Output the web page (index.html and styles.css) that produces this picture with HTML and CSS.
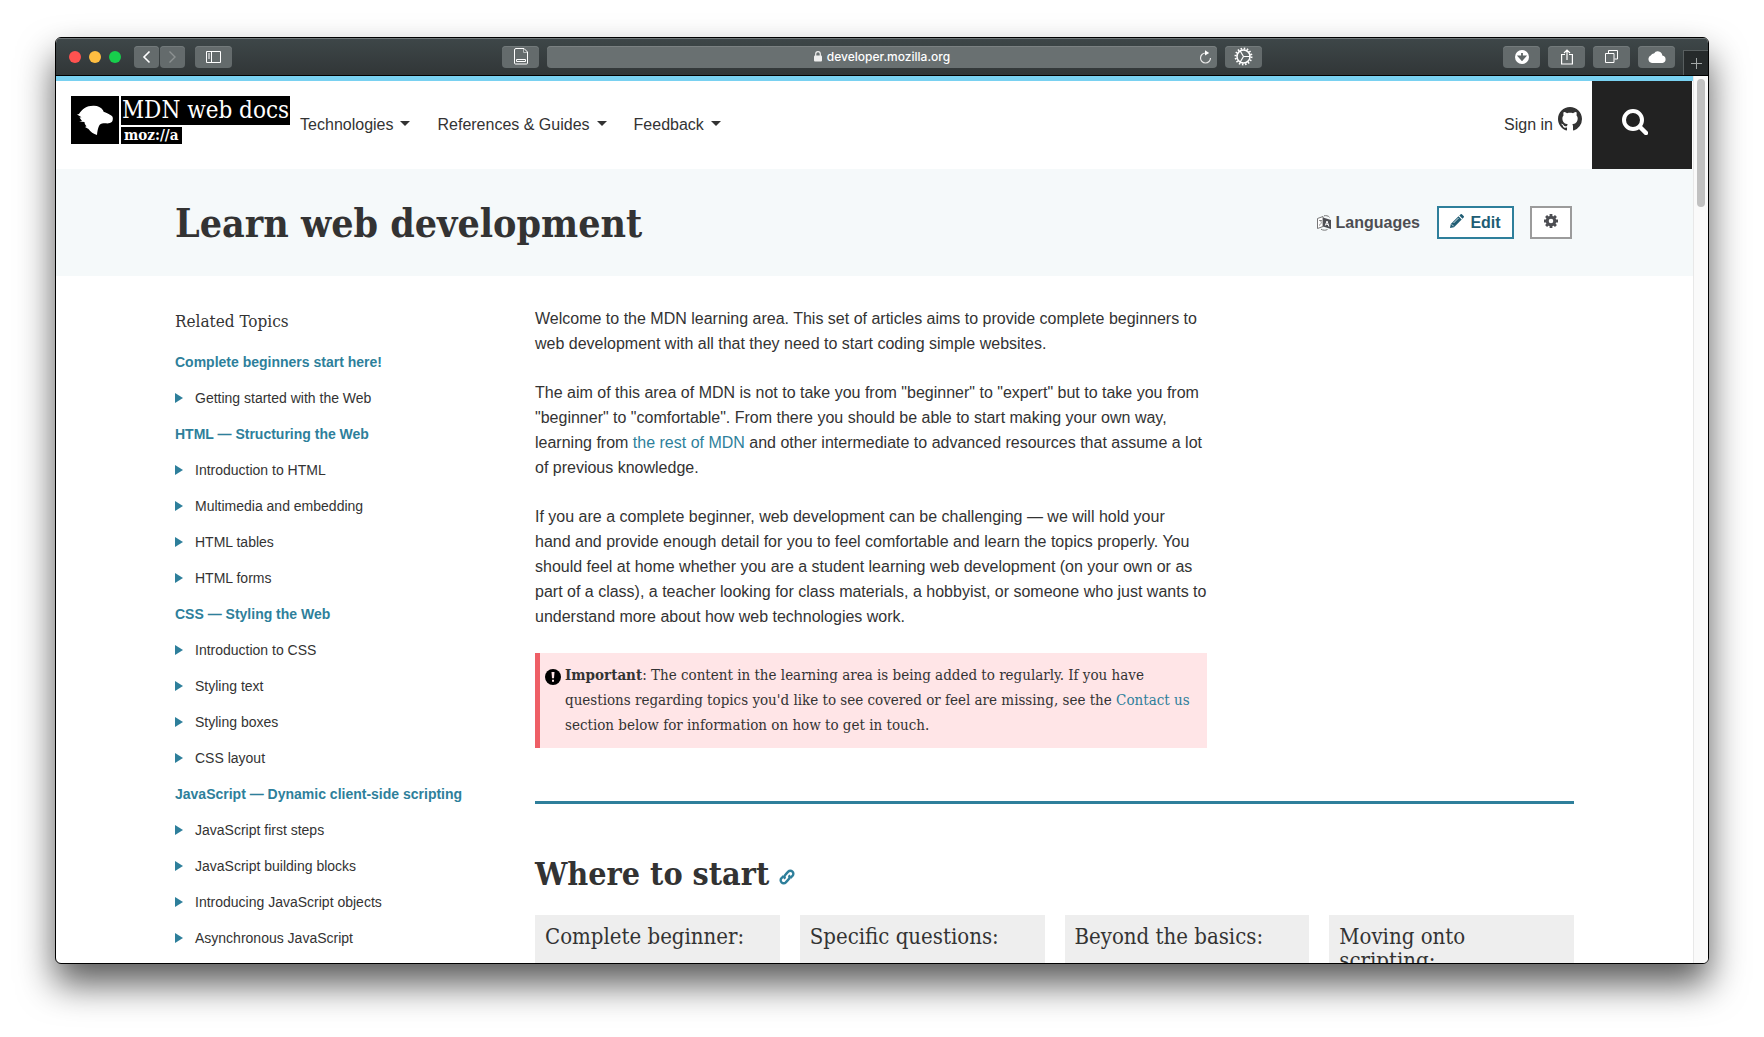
FILE: index.html
```html
<!DOCTYPE html>
<html lang="en">
<head>
<meta charset="utf-8">
<title>Learn web development</title>
<link rel="stylesheet" href="styles.css">
</head>
<body>
<div class="window">
  <div class="toolbar">
    <div class="tools tools-left">
      <span class="light light-red"></span>
      <span class="light light-yellow"></span>
      <span class="light light-green"></span>
      <div class="history">
        <button class="tool tool-half" aria-label="Back"><svg width="9" height="14" viewBox="0 0 9 14"><path d="M7.500 1.500L2 7l5.500 5.500" fill="none" stroke="#fff" stroke-width="1.600"/></svg></button>
        <button class="tool tool-half" aria-label="Forward"><svg width="9" height="14" viewBox="0 0 9 14"><path d="M1.500 1.500L7 7l-5.500 5.500" fill="none" stroke="#8d9292" stroke-width="1.400"/></svg></button>
      </div>
      <button class="tool" aria-label="Sidebar"><svg width="16" height="12" viewBox="0 0 16 12" fill="none" stroke="#fff"><path d="M.5.5h14v11H.5zM5.500.5v11M2 3h2M2 5h2M2 7h2"/></svg></button>
    </div>
    <div class="tools tools-center">
      <button class="tool" aria-label="Reader"><svg width="14" height="17" viewBox="0 0 14 17" fill="none" stroke="#fff"><path d="M2 .5h8l3.500 3.500v11a1 1 0 0 1-1 1h-11a1 1 0 0 1-1-1V2A1.500 1.500 0 0 1 2 .5zM2.500 11.500h9v2h-9z"/><path d="M9.500 1v3.500H13" stroke="#b5baba"/></svg></button>
      <div class="address">
        <svg width="8" height="11" viewBox="0 0 8 11"><rect y="4.500" width="8" height="6" rx="1" fill="#eee"/><path d="M1.700 5V3a2.300 2.300 0 0 1 4.600 0v2" fill="none" stroke="#eee" stroke-width="1.200"/></svg>
        <span>developer.mozilla.org</span>
        <button class="reload" aria-label="Reload"><svg width="13" height="14" viewBox="0 0 13 14"><path d="M7 3H6.500a5 5 0 1 0 5 5" fill="none" stroke="#e8e8e8" stroke-width="1.200"/><path d="M6 .3L10.200 3 6 5.500z" fill="#fff"/></svg></button>
      </div>
      <button class="tool" aria-label="Settings"><svg width="19" height="19" viewBox="0 0 19 19" fill="none" stroke="#fff"><circle cx="9.500" cy="9.500" r="8" stroke-width="2" stroke-dasharray="1.500 1.642"/><circle cx="9.500" cy="9.500" r="6.500" stroke-width="1.500"/><path d="M9.500 9.500H16M9.500 9.500L6.200 4M9.500 9.500L6.200 15" stroke-width="1.200"/></svg></button>
    </div>
    <div class="tools tools-right">
      <button class="tool" aria-label="Downloads"><svg width="14" height="14" viewBox="0 0 14 14"><circle cx="7" cy="7" r="7" fill="#fff"/><path d="M7 3v5.500M3.900 6.500L7 10l3.100-3.500z" stroke="#5f6666" stroke-width="1.800" fill="#5f6666"/></svg></button>
      <button class="tool" aria-label="Share"><svg width="12" height="16" viewBox="0 0 12 16" fill="none" stroke="#fff"><path d="M4 5.500H.6v9.500h10.800V5.500H8M6 11V1.200M3 4l3-3 3 3" stroke-width="1.200"/></svg></button>
      <button class="tool" aria-label="Tabs"><svg width="13" height="13" viewBox="0 0 13 13" fill="none" stroke="#fff"><path d="M.5 3.500h8.500v9H.5zM3.500 3V.5h9v8.500H9.500"/></svg></button>
      <button class="tool" aria-label="iCloud"><svg width="18" height="12" viewBox="0 0 18 12" fill="#fff"><path d="M4 12a4 4 0 0 1-1-7.700A3 3 0 0 1 6 2.500 4.500 4.500 0 0 1 14.300 4.500 3.800 3.800 0 0 1 14.500 12z"/></svg></button>
      <button class="new-tab" aria-label="New tab"><svg width="11" height="11" viewBox="0 0 11 11"><path d="M5.500 0v11M0 5.500h11" stroke="#a4a8a8"/></svg></button>
    </div>
  </div>

  <div class="viewport">
    <div class="page">
      <header class="site-header">
        <a class="logo" href="#" aria-label="MDN web docs">
          <svg class="logo-mark" width="48" height="48" viewBox="0 0 48 48"><rect width="48" height="48"/><path fill="#fff" d="M8 18c3-5 8-8.500 15-8.200 4 .1 7 1.700 9 4.400l.6 1.600c2.300.7 6 2.500 8.400 4.200 1.300 1 1 4.500 0 5.800-1.700 1.800-4.500 1.800-7 1.500-3-.5-5 .5-6 2.700-1.200 2.700-1.700 5.500-2 8.900-3.500-1-6.500-3.200-8.500-6l-3.500-2 1.500-.6c-1.200-1.500-2-2.700-2-4.300L8 25.500l3-.6-2.500-3.400 2-.3L6 18.500z"/></svg>
          <span class="logo-words">
            <span class="logo-name">MDN web docs</span>
            <span class="logo-owner">moz://a</span>
          </span>
        </a>
        <nav class="main-nav">
          <a href="#">Technologies<span class="caret"></span></a>
          <a href="#">References &amp; Guides<span class="caret"></span></a>
          <a href="#">Feedback<span class="caret"></span></a>
        </nav>
        <a class="sign-in" href="#">Sign in
          <svg width="24" height="24" viewBox="0 0 16 16" fill="#333"><path d="M8 0C3.580 0 0 3.580 0 8c0 3.540 2.290 6.530 5.470 7.590.4.070.55-.17.55-.38 0-.19-.01-.82-.01-1.490-2.010.37-2.530-.49-2.690-.94-.09-.23-.48-.94-.82-1.130-.28-.15-.68-.52-.01-.53.63-.01 1.080.58 1.230.82.72 1.210 1.870.87 2.330.66.07-.52.28-.87.51-1.070-1.780-.2-3.640-.89-3.640-3.950 0-.87.31-1.590.82-2.150-.08-.2-.36-1.020.08-2.120 0 0 .67-.21 2.200.82.64-.18 1.320-.27 2-.27s1.360.09 2 .27c1.530-1.040 2.200-.82 2.200-.82.44 1.100.16 1.920.08 2.120.51.56.82 1.270.82 2.150 0 3.070-1.870 3.750-3.650 3.950.29.25.54.73.54 1.480 0 1.070-.01 1.930-.01 2.200 0 .21.15.46.55.38A8.010 8.010 0 0 0 16 8c0-4.420-3.580-8-8-8z"/></svg>
        </a>
        <button class="search" aria-label="Search"><svg width="26" height="26" viewBox="0 0 26 26" fill="none" stroke="#fff"><circle cx="11" cy="11" r="9" stroke-width="4"/><path d="M18 18l6 6" stroke-width="4.500" stroke-linecap="round"/></svg></button>
      </header>

      <div class="hero">
        <h1>Learn web development</h1>
        <div class="actions">
          <a class="languages" href="#"><svg width="14" height="16" viewBox="0 0 14 16"><path d="M.5 3.500L6 1.500v10L.5 13.500z" fill="#fff" stroke="#777"/><path d="M2 5.500h3M3.500 5v1.500M2 10.500c1.500-1 2.500-2.500 2.500-4" stroke="#777" fill="none" stroke-width=".8"/><path d="M6 2.500l8 2.500v9l-8-2.500z" fill="#4d4e53"/><path d="M8.300 10.500L10 6l1.900 5.500M9 9l2.300.7" stroke="#fff" fill="none"/><path d="M4 14.200c2 1.300 4.500 1.300 6.500.3M7 .8c1.500-.4 4.500-.1 5.500 1.500" stroke="#777" fill="none"/></svg>Languages</a>
          <button class="action edit"><svg width="14" height="14" viewBox="0 0 14 14" fill="#205d74"><path d="M0 14l.8-4L8.500 2.300l3.200 3.200L4 13.200z"/><path d="M9.300 1.500L10.400.4a1.200 1.200 0 0 1 1.700 0l1.500 1.500a1.200 1.200 0 0 1 0 1.700l-1.100 1.100z"/><path d="M1.700 10.300l2 2M3.500 9l5-5" stroke="#fff" stroke-width=".8"/></svg>Edit</button>
          <button class="action advanced" aria-label="Advanced"><svg width="14" height="14" viewBox="0 0 14 14" fill="none" stroke="#4d4e53"><circle cx="7" cy="7" r="3.800" stroke-width="3"/><path d="M7 0v2.500M7 11.500V14M0 7h2.500M11.500 7H14M2.050 2.050l1.800 1.800M10.150 10.150l1.800 1.800M2.050 11.950l1.800-1.800M10.150 3.850l1.800-1.800" stroke-width="2.800"/></svg></button>
        </div>
      </div>

      <div class="columns">
        <aside class="sidebar">
          <h2>Related Topics</h2>
          <ul>
            <li><a class="topic" href="#">Complete beginners start here!</a></li>
            <li><a class="item" href="#">Getting started with the Web</a></li>
            <li><a class="topic" href="#">HTML — Structuring the Web</a></li>
            <li><a class="item" href="#">Introduction to HTML</a></li>
            <li><a class="item" href="#">Multimedia and embedding</a></li>
            <li><a class="item" href="#">HTML tables</a></li>
            <li><a class="item" href="#">HTML forms</a></li>
            <li><a class="topic" href="#">CSS — Styling the Web</a></li>
            <li><a class="item" href="#">Introduction to CSS</a></li>
            <li><a class="item" href="#">Styling text</a></li>
            <li><a class="item" href="#">Styling boxes</a></li>
            <li><a class="item" href="#">CSS layout</a></li>
            <li><a class="topic" href="#">JavaScript — Dynamic client-side scripting</a></li>
            <li><a class="item" href="#">JavaScript first steps</a></li>
            <li><a class="item" href="#">JavaScript building blocks</a></li>
            <li><a class="item" href="#">Introducing JavaScript objects</a></li>
            <li><a class="item" href="#">Asynchronous JavaScript</a></li>
          </ul>
        </aside>

        <main class="article">
          <div class="intro">
            <p>Welcome to the MDN learning area. This set of articles aims to provide complete beginners to web development with all that they need to start coding simple websites.</p>
            <p>The aim of this area of MDN is not to take you from "beginner" to "expert" but to take you from "beginner" to "comfortable". From there you should be able to start making your own way, learning from <a href="#">the rest of MDN</a> and other intermediate to advanced resources that assume a lot of previous knowledge.</p>
            <p>If you are a complete beginner, web development can be challenging — we will hold your<br>hand and provide enough detail for you to feel comfortable and learn the topics properly. You should feel at home whether you are a student learning web development (on your own or as part of a class), a teacher looking for class materials, a hobbyist, or someone who just wants to understand more about how web technologies work.</p>
            <div class="warning">
              <svg width="16" height="16" viewBox="0 0 16 16"><circle cx="8" cy="8" r="8"/><path d="M6.500 3h3L9 9.300H7zM7 10.800h2v2H7z" fill="#ffe5e7"/></svg>
              <p><strong>Important</strong>: The content in the learning area is being added to regularly. If you have<br>questions regarding topics you'd like to see covered or feel are missing, see the <a href="#">Contact us</a><br>section below for information on how to get in touch.</p>
            </div>
          </div>

          <section class="start">
            <h2>Where to start <a href="#" aria-label="Permalink"><svg width="16" height="16" viewBox="0 0 16 16" fill="none" stroke="#2e7f9b" stroke-width="2.400"><path d="M6.200 9.800a3 3 0 0 1 .3-4.200l2.700-3a3 3 0 0 1 4.300 4.200l-2 2.200"/><path d="M9.800 6.200a3 3 0 0 1-.3 4.200l-2.700 3a3 3 0 0 1-4.300-4.200l2-2.200"/></svg></a></h2>
            <div class="cards">
              <div class="card"><h3>Complete beginner:</h3></div>
              <div class="card"><h3>Specific questions:</h3></div>
              <div class="card"><h3>Beyond the basics:</h3></div>
              <div class="card"><h3>Moving onto scripting:</h3></div>
            </div>
          </section>
        </main>
      </div>
    </div>
    <div class="scrollbar"><div class="thumb"></div></div>
  </div>
</div>
</body>
</html>
```
FILE: styles.css
```css
* { box-sizing: border-box; }

:root {
  --slab: "DejaVu Serif Condensed", "DejaVu Serif", serif;
  --sans: "Liberation Sans", Arial, sans-serif;
  --link: #2e7f9b;
}

body {
  margin: 0;
  height: 100vh;
  padding: 37px 55px 73px;
  background: #fff;
  color: #333;
  font: 16px/25px var(--sans);
  overflow: hidden;
}

h1, h2, h3, p, ul { margin: 0; padding: 0; }
ul { list-style: none; }
a { color: var(--link); text-decoration: none; }
svg { display: block; flex: none; }
button {
  display: flex;
  align-items: center;
  justify-content: center;
  padding: 0;
  border: 0;
  font: inherit;
}

/* Browser window */
.window {
  display: flex;
  flex-direction: column;
  height: 100%;
  border: 1px solid #000;
  border-radius: 6px;
  background: #fff;
  overflow: hidden;
  box-shadow: 0 20px 36px rgba(0, 0, 0, .65);
}

.toolbar {
  display: grid;
  grid-template-columns: 1fr minmax(0, 760px) 1fr;
  flex: none;
  height: 38px;
  border-bottom: 1px solid #000;
  background: linear-gradient(#3e4749, #313637);
  box-shadow: inset 0 1px #6f7678;
}
.tools { display: flex; align-items: center; gap: 8px; }
.tools-left { padding-left: 13px; }
.light { width: 12px; height: 12px; border-radius: 50%; }
.light-red { background: #ff5250; }
.light-yellow { background: #ffbe41; }
.light-green { background: #17ce4c; }
.history { display: flex; gap: 1px; margin: 0 2px 0 5px; }
.tool {
  width: 37px;
  height: 22px;
  border-radius: 4px;
  background: #646b6c;
  box-shadow: inset 0 1px #737a7b;
}
.tool-half { width: 25px; }
.address {
  display: flex;
  flex: 1;
  align-items: center;
  justify-content: center;
  gap: 5px;
  position: relative;
  height: 22px;
  border-radius: 4px;
  background: #697071;
  box-shadow: inset 0 1px #7b8182;
  color: #fff;
  font: 500 12px/22px Inter, sans-serif;
}
.reload { position: absolute; right: 5px; background: none; }
.tools-right { justify-content: flex-end; }
.new-tab {
  align-self: flex-end;
  width: 25px;
  height: 25px;
  border: solid #585e5f;
  border-width: 1px 0 0 1px;
  background: #262a2b;
}

/* Scrolled page area */
.viewport { display: flex; flex: 1; min-height: 0; }
.page { flex: 1; min-width: 0; overflow: hidden; border-top: 5px solid #79d1f1; }
.scrollbar { flex: none; width: 15px; padding: 3px; border-left: 1px solid #e8e8e8; background: #fafafa; }
.thumb { width: 8px; height: 128px; border-radius: 4px; background: #c1c1c1; }

/* Site header */
.site-header { display: flex; height: 88px; padding: 0 1px 0 15px; }
.logo { display: flex; gap: 2px; margin-top: 15px; height: 48px; }
.logo-words { display: flex; flex-direction: column; align-items: flex-start; gap: 2px; color: #fff; }
.logo-name { padding: 0 1px; background: #000; font: 24px/29px var(--slab); }
.logo-owner { padding: 0 3px; background: #000; font: bold 15px/17px var(--slab); }
.main-nav { display: flex; gap: 27px; padding: 31px 0 0 10px; }
.main-nav a, .sign-in { color: #333; white-space: nowrap; }
.caret {
  display: inline-block;
  margin-left: 7px;
  border: 5px solid transparent;
  border-top-color: #333;
  border-bottom: 0;
  vertical-align: 4px;
}
.sign-in { display: flex; gap: 5px; margin: 31px 10px 0 auto; }
.sign-in svg { margin-top: -5px; }
.search { width: 100px; padding: 0 14px 6px 0; background: #222; }

/* Title band */
.hero {
  display: flex;
  align-items: center;
  justify-content: space-between;
  height: 107px;
  padding: 0 121px 0 119px;
  background: #f5f9fa;
}
h1 { font: bold 39px/48px var(--slab); }
.actions { display: flex; align-items: center; }
.languages { display: flex; align-items: center; gap: 5px; margin-right: 17px; color: #4d4e53; font-weight: bold; }
.action { height: 33px; border: 2px solid #9b9b9b; background: #fff; }
.edit { gap: 6px; width: 77px; margin-right: 16px; border-color: #2e7f9b; color: #205d74; font-weight: bold; }
.edit svg, .advanced svg { margin-bottom: 3px; }
.advanced { width: 42px; }

/* Content columns */
.columns {
  display: grid;
  grid-template-columns: 320px minmax(0, 1fr);
  gap: 40px;
  padding: 30px 119px 0;
}
.sidebar h2 { margin-bottom: 14px; font: 17px/30px var(--slab); }
.sidebar li { font-size: 14px; line-height: 24px; margin-bottom: 12px; }
.topic { font-weight: bold; }
.item { display: flex; align-items: center; gap: 12px; color: #333; }
.item::before {
  content: "";
  border: 5px solid transparent;
  border-left: 8px solid #2e7f9b;
  border-right: 0;
}

.intro { max-width: 672px; }
.intro > p { margin-bottom: 24px; }
.warning {
  display: flex;
  gap: 4px;
  padding: 10px 5px;
  border-left: 5px solid #ee5f66;
  background: #ffe5e7;
  font: 15px/25px var(--slab);
}
.warning svg { margin-top: 6px; }
.warning p { white-space: nowrap; }

.start { margin-top: 53px; padding-top: 50px; border-top: 3px solid var(--link); }
.start h2 { display: flex; align-items: center; gap: 10px; margin-bottom: 21px; font: bold 32px/40px var(--slab); }
.start h2 a { padding-top: 6px; }
.cards { display: grid; grid-template-columns: repeat(4, minmax(0, 1fr)); gap: 20px; }
.card { padding: 10px; background: #eee; }
.card h3 { font: 22px/24px var(--slab); }
```
